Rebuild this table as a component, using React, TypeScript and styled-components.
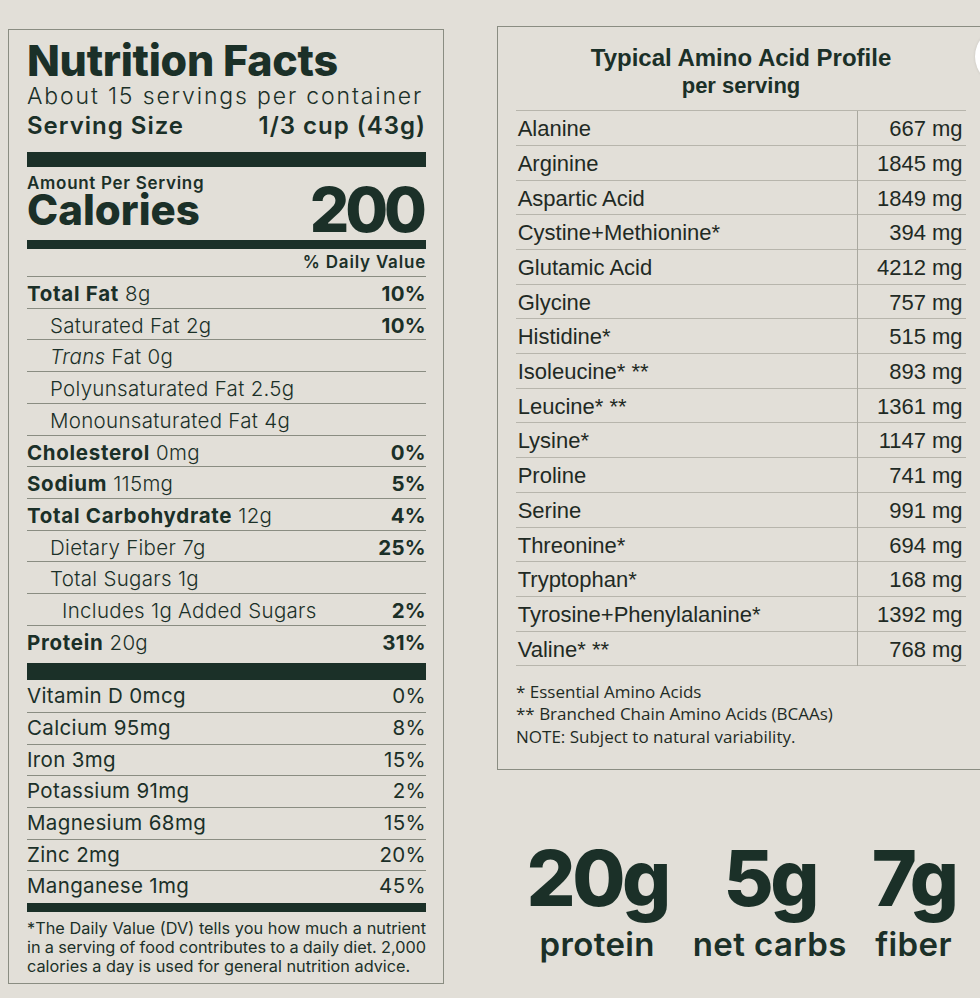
import React from "react";
import styled, { createGlobalStyle } from "styled-components";

const INK = "#1b3028";
const BG = "#e2dfd8";
const RULE = "#8a8d82";

const Global = createGlobalStyle`
  html, body { margin: 0; padding: 0; background: ${BG}; overflow: hidden; }
  #root { width: 980px; height: 998px; }
`;

const Page = styled.div`
  position: relative;
  width: 980px;
  height: 998px;
  overflow: hidden;
  display: flex;
  align-items: flex-start;
  gap: 53px;
  padding-left: 8px;
  box-sizing: border-box;
  background: ${BG};
`;

/* ---------- Nutrition label ---------- */
const Label = styled.section`
  flex-shrink: 0;
  margin-top: 29px;
  width: 436px;
  box-sizing: border-box;
  border: 1px solid ${RULE};
  padding: 8px 17px 7px 18px;
  font-family: Inter, "Noto Sans", sans-serif;
  color: ${INK};
`;

const Title = styled.h1`
  margin: 0;
  font-size: 43px;
  font-weight: 800;
  line-height: 44px;
  letter-spacing: -0.3px;
`;

const Servings = styled.div`
  font-size: 23px;
  font-weight: 300;
  line-height: 28px;
  letter-spacing: 1.85px;
  white-space: nowrap;
`;

const ServingSize = styled.div`
  display: flex;
  justify-content: space-between;
  font-size: 24px;
  font-weight: 600;
  line-height: 32px;
  letter-spacing: 1px;
`;

const Bar = styled.div<{ $h: number; $mt: number }>`
  height: ${(p) => p.$h}px;
  margin-top: ${(p) => p.$mt}px;
  background: ${INK};
`;

const CalRow = styled.div`
  display: flex;
  justify-content: space-between;
  align-items: flex-end;
  margin-top: 4.9px;
`;

const CalLeft = styled.div`
  display: flex;
  flex-direction: column;
  padding-bottom: 9.9px;
`;

const Amount = styled.div`
  font-size: 17px;
  font-weight: 600;
  line-height: 22px;
  letter-spacing: 0.7px;
`;

const Calories = styled.div`
  font-size: 42px;
  font-weight: 800;
  line-height: 31px;
`;

const CalValue = styled.div`
  font-size: 62px;
  font-weight: 800;
  line-height: 50px;
  letter-spacing: -4px;
  margin-right: 3px;
`;

const DVHead = styled.div`
  height: 28px;
  box-sizing: border-box;
  border-bottom: 1px solid ${RULE};
  text-align: right;
  font-size: 17px;
  font-weight: 600;
  line-height: 27px;
  letter-spacing: 0.8px;
`;

const Row = styled.div<{ $indent?: number; $last?: boolean }>`
  display: flex;
  justify-content: space-between;
  height: 31.7px;
  box-sizing: border-box;
  padding-top: 3px;
  padding-left: ${(p) => (p.$indent || 0)}px;
  border-bottom: ${(p) => (p.$last ? "none" : `1px solid ${RULE}`)};
  font-size: 20.5px;
  font-weight: 300;
  line-height: 27.7px;
  letter-spacing: 0.3px;
  white-space: nowrap;
`;

const Strong = styled.b`
  font-weight: 700;
  letter-spacing: 0.7px;
`;

const Em = styled.i`
  font-style: italic;
`;

const Pct = styled.span`
  font-weight: 700;
`;

const VitList = styled.div`
  padding-top: 1.6px;
`;

const VitRow = styled(Row)`
  padding-top: 1px;
  font-weight: 400;
  line-height: 27px;
  letter-spacing: 0.35px;
`;

const Footnote = styled.div`
  margin-top: 6.5px;
  font-size: 16.3px;
  font-weight: 400;
  line-height: 19.3px;
`;

const FootLine = styled.div<{ $justify?: boolean }>`
  word-spacing: ${(p) => (p.$justify ? "-3px" : "0")};
  text-align: ${(p) => (p.$justify ? "justify" : "left")};
  text-align-last: ${(p) => (p.$justify ? "justify" : "left")};
`;

/* ---------- Amino acid profile ---------- */
const RightCol = styled.div`
  flex-shrink: 0;
  display: flex;
  flex-direction: column;
  width: 488px;
`;

const Profile = styled.section`
  margin-top: 25.7px;
  box-sizing: border-box;
  width: 488px;
  border: 1px solid ${RULE};
  padding: 18.2px 18px 20.4px 18px;
  font-family: "Liberation Sans", Arial, sans-serif;
  color: #1f2a24;
`;

const ProfileTitle = styled.div`
  text-align: center;
  font-size: 24px;
  font-weight: 700;
  line-height: 26px;
  color: ${INK};
`;

const ProfileSub = styled.div`
  margin-top: 1px;
  text-align: center;
  font-size: 22px;
  font-weight: 700;
  line-height: 27px;
  color: ${INK};
`;

const AminoTable = styled.div`
  margin-top: 11.4px;
  border-top: 1px solid #b7b5ac;
`;

const AminoRow = styled.div`
  display: grid;
  grid-template-columns: 1fr 109px;
  height: 34.7px;
  box-sizing: border-box;
  border-bottom: 1px solid #b7b5ac;
  font-size: 22px;
  line-height: 32.7px;
`;

const AminoName = styled.div`
  padding: 2px 0 0 1.7px;
  white-space: nowrap;
`;

const AminoValue = styled.div`
  padding: 2px 3.4px 0 0;
  text-align: right;
  border-left: 1px solid #a9a89f;
  white-space: nowrap;
`;

const Notes = styled.div`
  margin-top: 14.7px;
  font-family: "Open Sans", "Noto Sans", sans-serif;
  font-size: 17px;
  line-height: 22.5px;
  color: #1e2b24;
`;

const Stats = styled.div`
  display: flex;
  justify-content: center;
  gap: 25px;
  margin-top: 76.7px;
  font-family: Inter, "Noto Sans", sans-serif;
  color: ${INK};
`;

const Stat = styled.div`
  display: flex;
  flex-direction: column;
  align-items: center;
`;

const StatNum = styled.div`
  font-size: 77px;
  font-weight: 800;
  line-height: 62px;
  letter-spacing: -3.5px;
`;

const StatLabel = styled.div`
  margin-top: 18px;
  font-size: 33px;
  font-weight: 600;
  line-height: 34px;
  letter-spacing: 0.4px;
`;

const Floater = styled.div`
  position: absolute;
  left: 975px;
  top: 28px;
  width: 57px;
  height: 57px;
  border-radius: 50%;
  background: #ffffff;
  box-shadow: 0 0 3px rgba(0, 0, 0, 0.12);
`;

type Nutrient = {
  bold?: string;
  italic?: string;
  rest: string;
  dv?: string;
  indent?: number;
};

const nutrients: Nutrient[] = [
  { bold: "Total Fat", rest: " 8g", dv: "10%" },
  { rest: "Saturated Fat 2g", dv: "10%", indent: 23 },
  { italic: "Trans", rest: " Fat 0g", indent: 23 },
  { rest: "Polyunsaturated Fat 2.5g", indent: 23 },
  { rest: "Monounsaturated Fat 4g", indent: 23 },
  { bold: "Cholesterol", rest: " 0mg", dv: "0%" },
  { bold: "Sodium", rest: " 115mg", dv: "5%" },
  { bold: "Total Carbohydrate", rest: " 12g", dv: "4%" },
  { rest: "Dietary Fiber 7g", dv: "25%", indent: 23 },
  { rest: "Total Sugars 1g", indent: 23 },
  { rest: "Includes 1g Added Sugars", dv: "2%", indent: 35 },
  { bold: "Protein", rest: " 20g", dv: "31%" },
];

const vitamins: [string, string][] = [
  ["Vitamin D 0mcg", "0%"],
  ["Calcium 95mg", "8%"],
  ["Iron 3mg", "15%"],
  ["Potassium 91mg", "2%"],
  ["Magnesium 68mg", "15%"],
  ["Zinc 2mg", "20%"],
  ["Manganese 1mg", "45%"],
];

const aminos: [string, string][] = [
  ["Alanine", "667 mg"],
  ["Arginine", "1845 mg"],
  ["Aspartic Acid", "1849 mg"],
  ["Cystine+Methionine*", "394 mg"],
  ["Glutamic Acid", "4212 mg"],
  ["Glycine", "757 mg"],
  ["Histidine*", "515 mg"],
  ["Isoleucine* **", "893 mg"],
  ["Leucine* **", "1361 mg"],
  ["Lysine*", "1147 mg"],
  ["Proline", "741 mg"],
  ["Serine", "991 mg"],
  ["Threonine*", "694 mg"],
  ["Tryptophan*", "168 mg"],
  ["Tyrosine+Phenylalanine*", "1392 mg"],
  ["Valine* **", "768 mg"],
];

const stats: [string, string][] = [
  ["20g", "protein"],
  ["5g", "net carbs"],
  ["7g", "fiber"],
];

export default function App() {
  return (
    <>
      <Global />
      <Page>
        <Label>
          <Title>Nutrition Facts</Title>
          <Servings>About 15 servings per container</Servings>
          <ServingSize>
            <span>Serving Size</span>
            <span>1/3 cup (43g)</span>
          </ServingSize>
          <Bar $h={15} $mt={10.4} />
          <CalRow>
            <CalLeft>
              <Amount>Amount Per Serving</Amount>
              <Calories>Calories</Calories>
            </CalLeft>
            <CalValue>200</CalValue>
          </CalRow>
          <Bar $h={9} $mt={4.9} />
          <DVHead>% Daily Value</DVHead>
          {nutrients.map((n, i) => (
            <Row key={i} $indent={n.indent} $last={i === nutrients.length - 1}>
              <span>
                {n.bold && <Strong>{n.bold}</Strong>}
                {n.italic && <Em>{n.italic}</Em>}
                {n.rest}
              </span>
              {n.dv && <Pct>{n.dv}</Pct>}
            </Row>
          ))}
          <Bar $h={17} $mt={5.3} />
          <VitList>
            {vitamins.map(([name, dv], i) => (
              <VitRow key={name} $last={i === vitamins.length - 1}>
                <span>{name}</span>
                <span>{dv}</span>
              </VitRow>
            ))}
          </VitList>
          <Bar $h={9} $mt={0} />
          <Footnote>
            <FootLine $justify>*The Daily Value (DV) tells you how much a nutrient</FootLine>
            <FootLine $justify>in a serving of food contributes to a daily diet. 2,000</FootLine>
            <FootLine>calories a day is used for general nutrition advice.</FootLine>
          </Footnote>
        </Label>

        <RightCol>
          <Profile>
            <ProfileTitle>Typical Amino Acid Profile</ProfileTitle>
            <ProfileSub>per serving</ProfileSub>
            <AminoTable>
              {aminos.map(([name, v]) => (
                <AminoRow key={name}>
                  <AminoName>{name}</AminoName>
                  <AminoValue>{v}</AminoValue>
                </AminoRow>
              ))}
            </AminoTable>
            <Notes>
              <div>* Essential Amino Acids</div>
              <div>** Branched Chain Amino Acids (BCAAs)</div>
              <div>NOTE: Subject to natural variability.</div>
            </Notes>
          </Profile>
          <Stats>
            {stats.map(([num, label]) => (
              <Stat key={label}>
                <StatNum>{num}</StatNum>
                <StatLabel>{label}</StatLabel>
              </Stat>
            ))}
          </Stats>
        </RightCol>
        <Floater />
      </Page>
    </>
  );
}
